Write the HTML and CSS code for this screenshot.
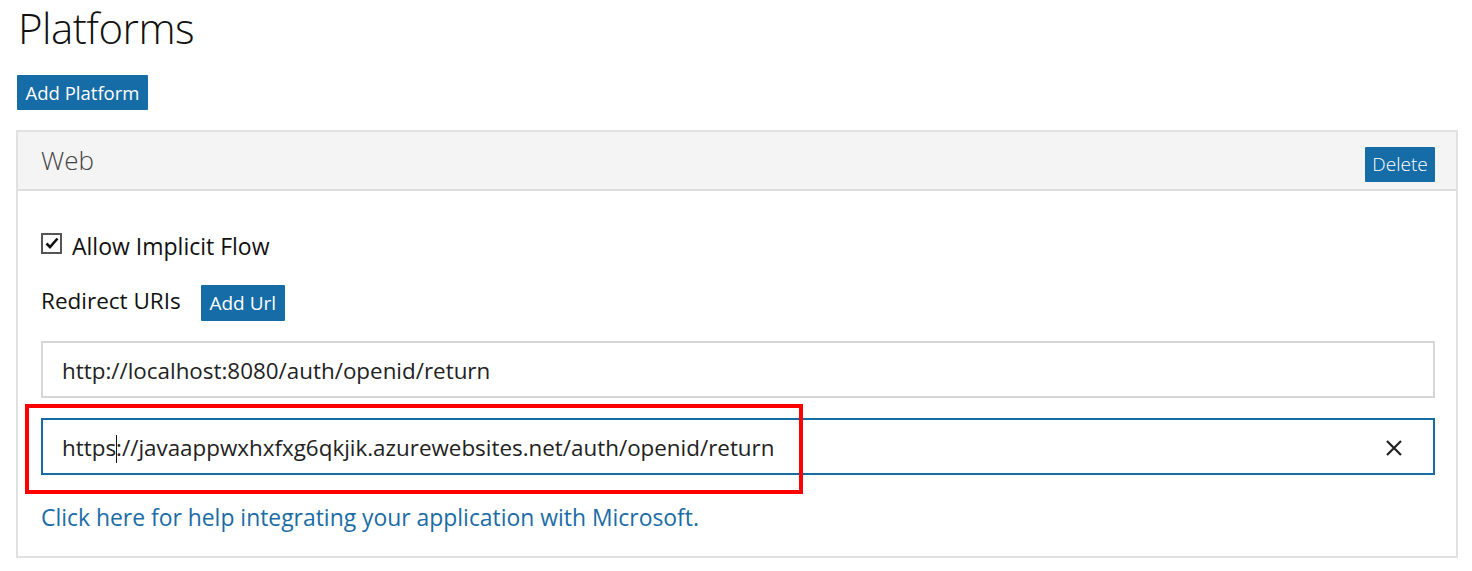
FILE: index.html
```html
<!DOCTYPE html>
<html>
<head>
<meta charset="utf-8">
<link rel="stylesheet" href="styles.css">
</head>
<body>
<div class="page">
  <h1 class="title">Platforms</h1>
  <button class="btn btn-add-platform">Add Platform</button>
  <div class="panel">
    <div class="panel-head">
      <span class="panel-title">Web</span>
      <button class="btn btn-delete">Delete</button>
    </div>
    <div class="panel-body">
      <label class="check-row">
        <span class="checkbox">
          <svg width="16" height="16" viewBox="0 0 16 16"><path d="M2.5 8.5 L6 12 L13.5 3.5" fill="none" stroke="#111" stroke-width="2.6"/></svg>
        </span>
        <span class="check-label">Allow Implicit Flow</span>
      </label>
      <div class="uri-row">
        <span class="uri-label">Redirect URIs</span>
        <button class="btn btn-add-url">Add Url</button>
      </div>
      <div class="input input-plain">http://localhost:8080/auth/openid/return</div>
      <div class="input-wrap">
        <div class="input input-focus">
          <span class="input-text">https<span class="caret"></span>://javaappwxhxfxg6qkjik.azurewebsites.net/auth/openid/return</span>
          <svg class="close" width="18" height="18" viewBox="0 0 18 18"><path d="M2 2 L16 16 M16 2 L2 16" stroke="#222" stroke-width="2.2"/></svg>
        </div>
        <div class="highlight"></div>
      </div>
      <a class="help-link" href="#">Click here for help integrating your application with Microsoft.</a>
    </div>
  </div>
</div>
</body>
</html>
```
FILE: styles.css
```css
html, body {
  margin: 0;
  padding: 0;
  background: #fff;
}
.page {
  font-family: "Open Sans", "Noto Sans", sans-serif;
  color: #222;
  padding: 0 14px 0 16px;
}
.title {
  margin: 0;
  padding: 0 0 0 2px;
  font-size: 42px;
  font-weight: 300;
  line-height: 56px;
  color: #111;
  letter-spacing: -0.5px;
}
.btn {
  font-family: "Open Sans", "Noto Sans", sans-serif;
  background: #166ca6;
  color: #fff;
  border: 0;
  border-radius: 1px;
  padding: 0;
  cursor: pointer;
}
.btn-add-platform {
  margin: 19px 0 0 1px;
  width: 131px;
  height: 35px;
  font-size: 18.5px;
}
.panel {
  margin-top: 20px;
  border: 2px solid #e1e1e1;
  width: 1438px;
  height: 424px;
}
.panel-head {
  height: 57px;
  background: #f4f4f4;
  border-bottom: 2px solid #dedede;
  display: flex;
  align-items: center;
  justify-content: space-between;
  padding: 0 21px 0 23px;
}
.panel-title {
  font-size: 26px;
  font-weight: 300;
  color: #444;
  margin-top: -2px;
}
.btn-delete {
  width: 70px;
  height: 35px;
  font-size: 19px;
  margin-top: 7px;
  font-weight: 300;
}
.panel-body {
  padding: 42px 21px 0 23px;
}
.check-row {
  display: flex;
  align-items: center;
  height: 26px;
}
.checkbox {
  width: 17px;
  height: 17px;
  border: 2px solid #555;
  margin-top: -6px;
  display: flex;
  align-items: center;
  justify-content: center;
}
.check-label {
  font-size: 23px;
  margin-left: 10px;
  color: #111;
}
.uri-row {
  display: flex;
  align-items: center;
  margin-top: 26px;
  height: 36px;
}
.uri-label {
  font-size: 22.5px;
  color: #111;
  margin-top: -6px;
}
.btn-add-url {
  margin-left: 20px;
  width: 84px;
  height: 36px;
  font-size: 19px;
}
.input {
  box-sizing: border-box;
  height: 57px;
  display: flex;
  align-items: center;
  font-size: 22.4px;
  padding-left: 19px;
  padding-top: 2px;
  color: #222;
}
.input-plain {
  margin-top: 20px;
  border: 2px solid #d6d6d6;
}
.input-wrap {
  position: relative;
  margin-top: 20px;
}
.input-focus {
  border: 2px solid #176ca4;
  justify-content: space-between;
  padding-right: 30px;
}
.caret {
  display: inline-block;
  width: 1px;
  height: 28px;
  background: #111;
  vertical-align: -7px;
  margin: 0 -1px 0 0;
}
.close {
  flex: none;
}
.highlight {
  position: absolute;
  left: -16px;
  top: -14px;
  width: 770px;
  height: 82px;
  border: 4px solid #f00;
  pointer-events: none;
}
.help-link {
  display: block;
  margin-top: 27px;
  font-size: 22.9px;
  color: #1b6ca6;
  text-decoration: none;
}
```
